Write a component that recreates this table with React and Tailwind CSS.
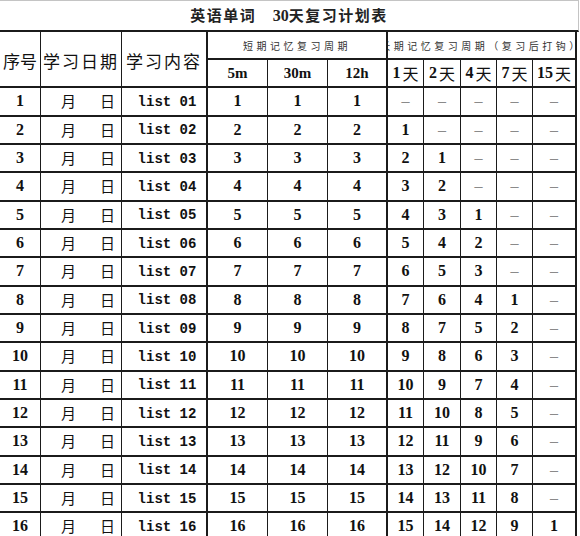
import React from 'react';

const cols = 'grid grid-cols-[41px_81px_86px_60px_60px_60px_36px_37px_36px_36px_44px]';
const serif = "font-['Liberation_Serif','Noto_Sans_CJK_SC',serif]";
const cjk = "font-['Noto_Sans_CJK_SC',sans-serif]";

function dash(v) {
  if (v > 0) return <span className="font-bold">{v}</span>;
  return <span className="text-[#8a8a8a] font-normal">–</span>;
}

function Cell({ children, thick, between, className = '' }) {
  return (
    <div
      className={`flex items-center ${between ? 'justify-between' : 'justify-center'} border-b-2 border-[#1b1b1b] ${thick ? 'border-r-2' : 'border-r'} ${className}`}
    >
      {children}
    </div>
  );
}

function BodyRow({ n }) {
  const num = String(n).padStart(2, '0');
  return (
    <div className={`${cols} h-[28.33px]`}>
      <Cell className={`${serif} font-bold text-[16px]`}>{n}</Cell>
      <Cell between className={`${cjk} text-[15px] pl-[20px] pr-[6px]`}>
        <span>月</span>
        <span>日</span>
      </Cell>
      <Cell thick className="font-['Liberation_Mono',monospace] font-bold text-[14px] pl-[6px] pt-[2px]">
        list {num}
      </Cell>
      <Cell className={`${serif} font-bold text-[16px]`}>{n}</Cell>
      <Cell className={`${serif} font-bold text-[16px]`}>{n}</Cell>
      <Cell thick className={`${serif} font-bold text-[16px]`}>{n}</Cell>
      <Cell className={`${serif} text-[16px]`}>{dash(n - 1)}</Cell>
      <Cell className={`${serif} text-[16px]`}>{dash(n - 2)}</Cell>
      <Cell className={`${serif} text-[16px]`}>{dash(n - 4)}</Cell>
      <Cell className={`${serif} text-[16px]`}>{dash(n - 7)}</Cell>
      <Cell thick className={`${serif} text-[16px]`}>{dash(n - 15)}</Cell>
    </div>
  );
}

function DayHead({ d, thick }) {
  return (
    <Cell thick={thick} className="text-[16px]">
      <span className={`${serif} font-bold`}>{d}</span>
      <span className={`${cjk} ml-[2px]`}>天</span>
    </Cell>
  );
}

export default function App() {
  const rows = Array.from({ length: 16 }, (_, i) => i + 1);

  return (
    <div className="w-[580px] h-[536px] overflow-hidden bg-white text-[#111]">
      {/* 标题 */}
      <div className="w-[579px] h-[32px] border-t border-t-[#c4c4c4] border-r border-r-[#c4c4c4] border-b-2 border-b-[#1b1b1b] flex items-center justify-center">
        <span className={`${cjk} font-bold text-[15px] tracking-[1.5px] text-[#222]`}>
          英语单词　<span className={`${serif} text-[16px] tracking-normal`}>30</span>天复习计划表
        </span>
      </div>

      {/* 表头 */}
      <div className={`${cols} grid-rows-[28.33px_28px]`}>
        <Cell className={`${cjk} row-span-2 text-[17px] pt-[4px] whitespace-nowrap`}>序号</Cell>
        <Cell className={`${cjk} row-span-2 text-[17px] tracking-[2px] pt-[4px] whitespace-nowrap`}>学习日期</Cell>
        <Cell thick className={`${cjk} row-span-2 text-[17px] tracking-[2px] pt-[4px] whitespace-nowrap`}>学习内容</Cell>
        <Cell thick className={`${cjk} col-span-3 text-[10px] tracking-[3.5px] text-[#333] whitespace-nowrap`}>
          短期记忆复习周期
        </Cell>
        <Cell thick className={`${cjk} col-span-5 text-[10px] tracking-[3.5px] text-[#333] whitespace-nowrap overflow-hidden`}>
          长期记忆复习周期（复习后打钩）
        </Cell>
        <Cell className={`${serif} font-bold text-[15px]`}>5m</Cell>
        <Cell className={`${serif} font-bold text-[15px]`}>30m</Cell>
        <Cell thick className={`${serif} font-bold text-[15px]`}>12h</Cell>
        <DayHead d="1" />
        <DayHead d="2" />
        <DayHead d="4" />
        <DayHead d="7" />
        <DayHead d="15" thick />
      </div>

      {/* 内容 */}
      {rows.map((n) => (
        <BodyRow key={n} n={n} />
      ))}
    </div>
  );
}
